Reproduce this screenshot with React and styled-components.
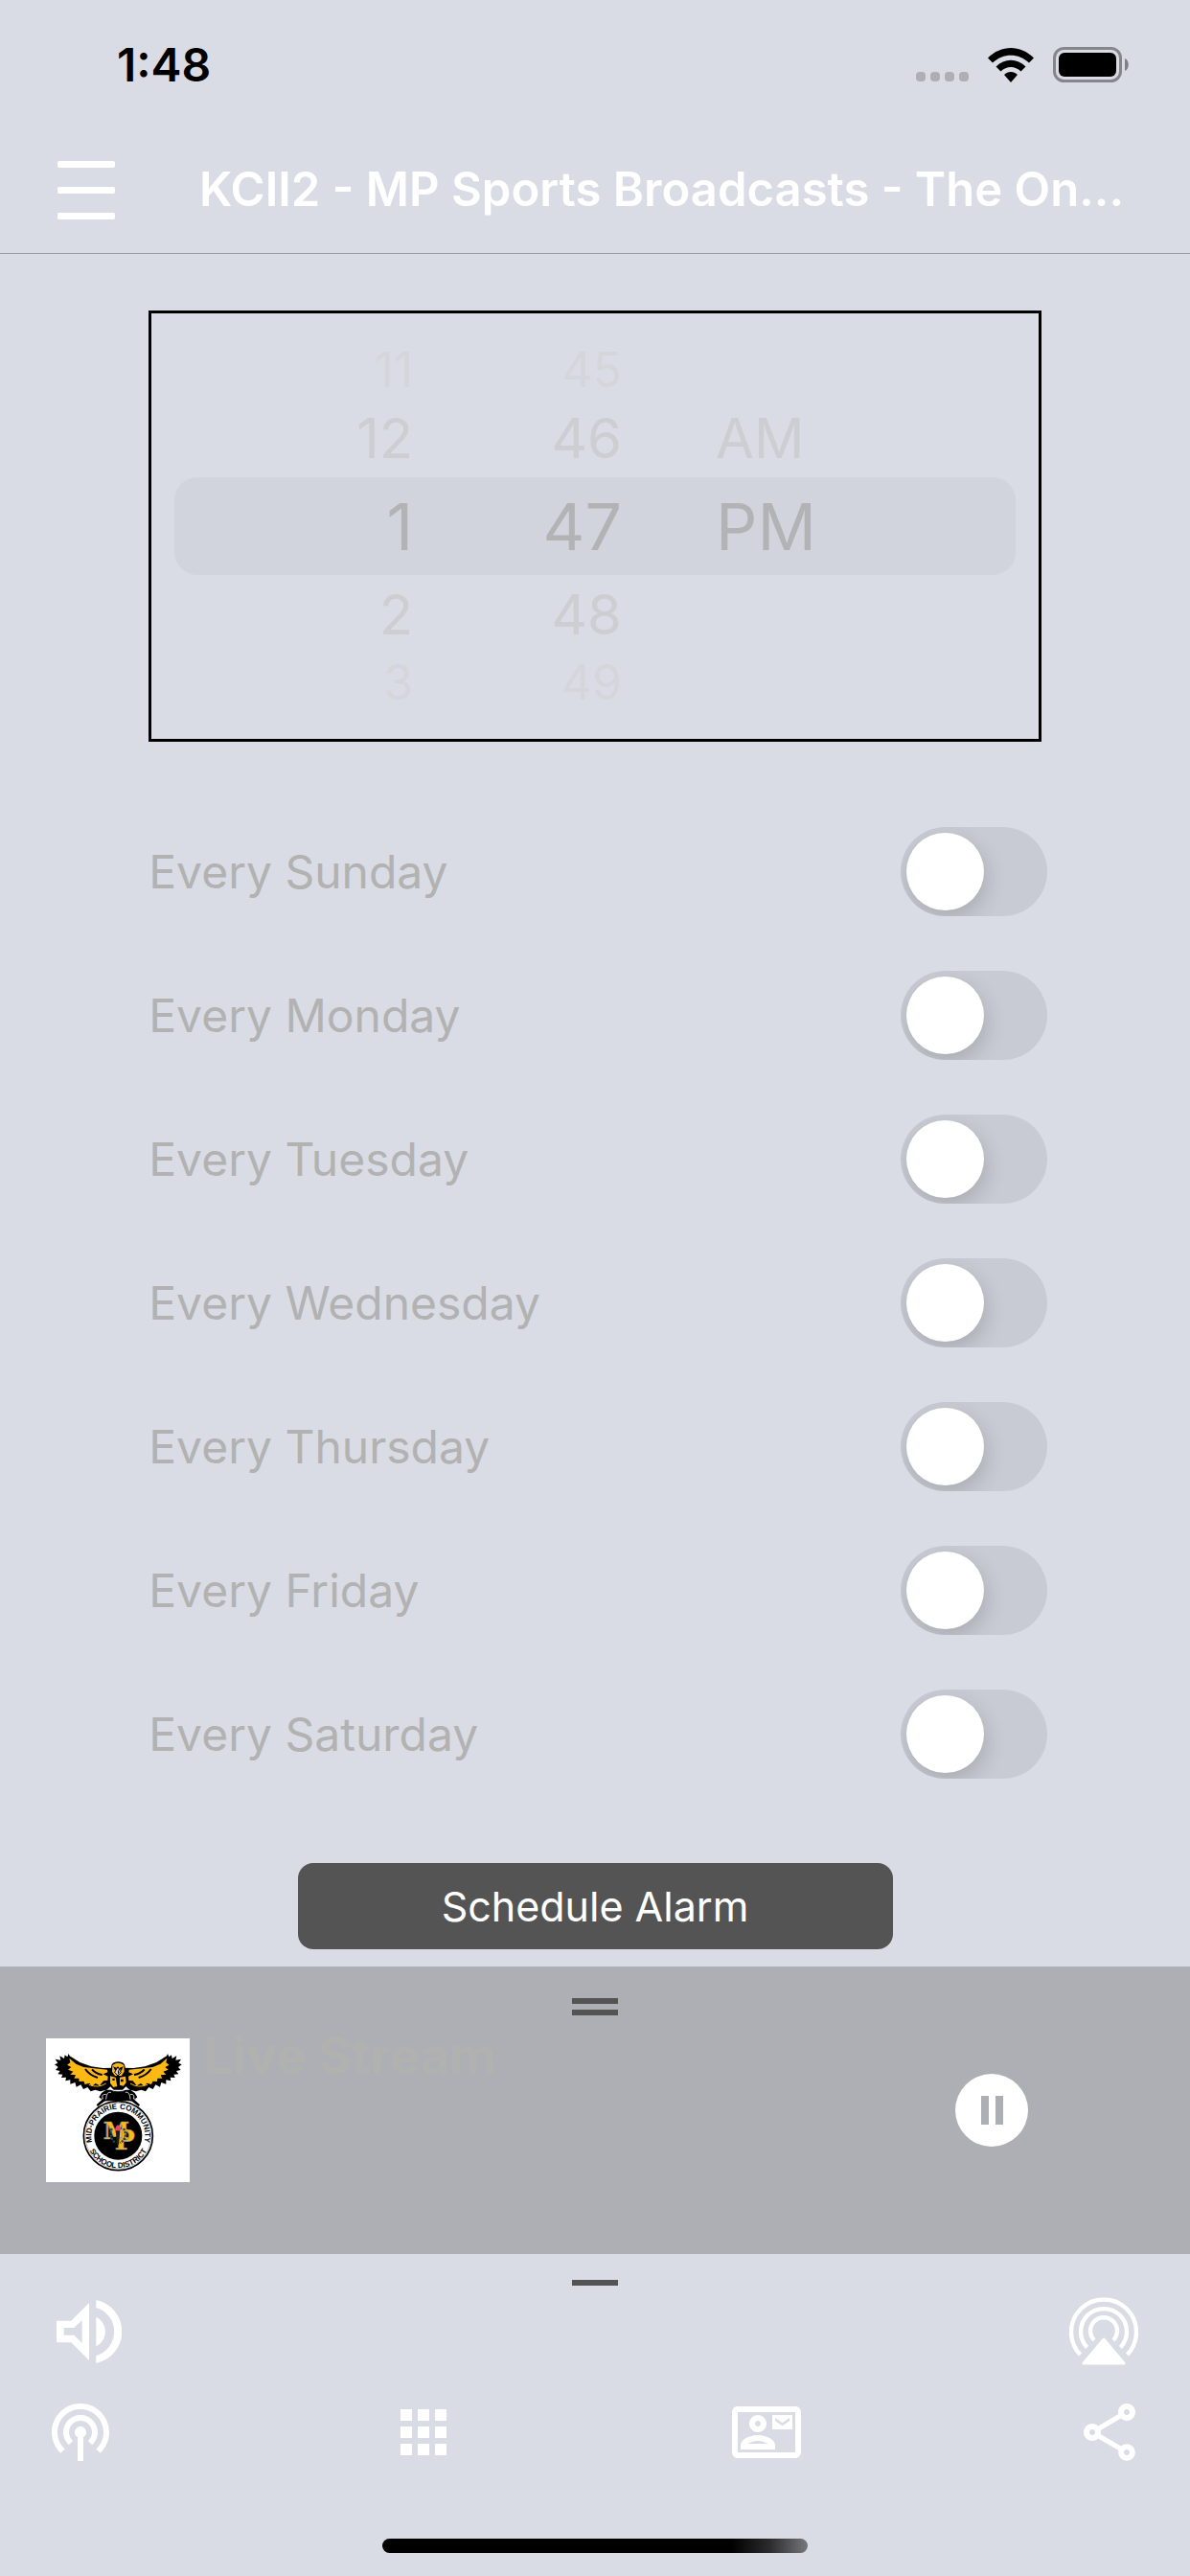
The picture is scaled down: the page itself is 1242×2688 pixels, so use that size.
import React, { useState } from "react";
import styled, { createGlobalStyle } from "styled-components";
import { MdApps, MdOutlineContactMail, MdOutlineShare, MdPodcasts } from "react-icons/md";

const GlobalStyle = createGlobalStyle`
  * {
    box-sizing: border-box;
  }

  body {
    margin: 0;
    background-color: #d9dce4;
    font-family: Inter, "Liberation Sans", sans-serif;
  }

  button {
    border: 0;
    padding: 0;
    background: none;
    color: inherit;
    font: inherit;
    cursor: pointer;
  }

  svg {
    display: block;
  }
`;

const Screen = styled.div`
  display: flex;
  flex-direction: column;
  min-height: 100vh;
`;

const StatusBar = styled.div`
  display: flex;
  align-items: center;
  justify-content: space-between;
  height: 132px;
  padding: 3px 64px 0 122px;
`;

const Clock = styled.time`
  font-size: 48px;
  font-weight: 600;
  line-height: 60px;
`;

const StatusIcons = styled.div`
  display: flex;
  align-items: center;
  gap: 20px;
`;

const SignalDots = styled.div`
  display: flex;
  align-self: flex-end;
  gap: 5px;
  padding-bottom: 1px;

  span {
    width: 10px;
    height: 10px;
    border-radius: 4px;
    background-color: #aeafb4;
  }
`;

const Header = styled.header`
  display: flex;
  align-items: center;
  gap: 88px;
  height: 133px;
  padding: 0 68px 0 60px;
  border-bottom: 1px solid #9b9ca1;
  color: #ffffff;

  h1 {
    flex: 1;
    min-width: 0;
    margin: 0;
    font-size: 49px;
    font-weight: 600;
    line-height: 60px;
    white-space: nowrap;
  }
`;

const MenuButton = styled.button`
  display: flex;
  flex-direction: column;
  gap: 20px;
  width: 60px;

  span {
    height: 7px;
    border-radius: 2px;
    background-color: #ffffff;
  }
`;

const Main = styled.main`
  display: flex;
  flex: 1;
  flex-direction: column;
  width: 75%;
  margin: 0 auto;
  padding: 59px 0 18px;
`;

const Picker = styled.div`
  padding: 29px 24px;
  border: 3px solid #000000;
`;

const PickerRow = styled.div`
  display: grid;
  grid-template-columns: 249fr 218fr 411fr;
  align-items: center;
  height: ${({ $size }) => $size.height}px;
  border-radius: 24px;
  background-color: ${({ $selected }) => ($selected ? "#d1d4dc" : "transparent")};
  color: ${({ $size }) => $size.color};
  font-size: ${({ $size }) => $size.font}px;
  line-height: 1;
`;

const PickerValue = styled.button`
  justify-self: ${({ $period }) => ($period ? "start" : "end")};
  padding-left: ${({ $period }) => ($period ? "98px" : "0")};
`;

const DayList = styled.div`
  display: flex;
  flex-direction: column;
  gap: 57px;
  margin: 89px -6px 88px 0;
`;

const DayRow = styled.label`
  display: flex;
  align-items: center;
  justify-content: space-between;
  color: #b2b2b2;
  font-size: 48px;
  line-height: 60px;
`;

const Switch = styled.input`
  appearance: none;
  width: 153px;
  height: 93px;
  margin: 0;
  padding: 6px;
  overflow: hidden;
  border-radius: 47px;
  background-color: ${({ checked }) => (checked ? "#34c759" : "#c8cbd3")};
  cursor: pointer;

  &::before {
    content: "";
    display: block;
    width: 81px;
    height: 81px;
    margin-left: ${({ checked }) => (checked ? "60px" : "0")};
    border-radius: 50%;
    background-color: #ffffff;
    box-shadow: 2px 8px 22px rgba(0, 0, 0, 0.16);
  }
`;

const ScheduleButton = styled.button`
  align-self: center;
  width: 621px;
  max-width: 100%;
  height: 90px;
  border-radius: 16px;
  background-color: #545454;
  color: #ffffff;
  font-size: 43px;
`;

const Player = styled.section`
  height: 300px;
  padding-top: 33px;
  background-color: #aeafb4;
`;

const Handle = styled.div`
  width: 48px;
  height: ${({ $double }) => ($double ? "18px" : "6px")};
  margin: 0 auto;
  border: solid #545454;
  border-width: ${({ $double }) => ($double ? "6px 0" : "6px 0 0")};
`;

const PlayerBody = styled.div`
  display: flex;
  gap: 15px;
  padding: 24px 169px 0 48px;
`;

const Artwork = styled.svg`
  flex: none;
  width: 150px;
  height: 150px;
  background-color: #ffffff;
`;

const TrackTitle = styled.h2`
  flex: 1;
  margin: 0;
  color: #b1b1b0;
  font-size: 53px;
  font-weight: 700;
  line-height: 36px;
`;

const PauseButton = styled.button`
  display: flex;
  align-items: center;
  align-self: center;
  justify-content: center;
  gap: 7px;
  width: 76px;
  height: 76px;
  border-radius: 50%;
  background-color: #ffffff;

  span {
    width: 8px;
    height: 30px;
    background-color: #aeafb4;
  }
`;

const Footer = styled.footer`
  display: flex;
  flex-direction: column;
  height: 336px;
  padding: 27px 0 24px;
  color: #ffffff;
`;

const OutputRow = styled.div`
  display: flex;
  align-items: center;
  justify-content: space-between;
  padding: 12px 54px 0 59px;
`;

const TabBar = styled.nav`
  display: flex;
  justify-content: space-between;
  padding: 33px 48px 0;

  svg {
    width: 72px;
    height: 72px;
  }
`;

const HomeIndicator = styled.div`
  width: 444px;
  height: 15px;
  margin: auto auto 0;
  border-radius: 8px;
  background: linear-gradient(to right, #000000 82%, #2b2b2d 91%, #77787c);
`;

const days = ["Sunday", "Monday", "Tuesday", "Wednesday", "Thursday", "Friday", "Saturday"];

const outer = { height: 60, font: 50, color: "#d4d6db" };
const near = { height: 82, font: 58, color: "#cdced2" };
const center = { height: 102, font: 68, color: "#b2b3b5" };

const pickerRows = [
  { hour: "11", minute: "45", size: outer },
  { hour: "12", minute: "46", period: "AM", size: near },
  { hour: "1", minute: "47", period: "PM", size: center, selected: true },
  { hour: "2", minute: "48", size: near },
  { hour: "3", minute: "49", size: outer },
];

const WifiIcon = () => (
  <svg width="48" height="36" viewBox="0 0 48 36" aria-label="Wi-Fi">
    <path d="M0 10.5C14-3.5 34-3.5 48 10.5L43 15.5C32 5 16 5 5 15.5Z" />
    <path d="M8.500 19.500C17.500 10.500 30.500 10.500 39.500 19.500L34.500 24.500C28.500 18.500 19.500 18.500 13.500 24.500Z" />
    <path d="M17 28C21 24 27 24 31 28L24 36Z" />
  </svg>
);

const BatteryIcon = () => (
  <svg width="79" height="37" viewBox="0 0 79 37" aria-label="Battery">
    <rect x="1.500" y="1.500" width="69" height="34" rx="10" fill="none" stroke="#85868b" strokeWidth="3" />
    <rect x="6" y="6" width="60" height="25" rx="6" />
    <path d="M75 12C80 14 80 23 75 25Z" fill="#7f8085" />
  </svg>
);

const VolumeIcon = () => (
  <svg width="68" height="66" viewBox="117 90 204 198" fill="currentColor">
    <path
      fillRule="evenodd"
      d="M117 155H163L219 99V279L163 223H117ZM140 177V200H172L197 225V153L172 177Z"
    />
    <path d="M241 143C279 162 279 216 241 235Z" />
    <path d="M241 90A101 101 0 0 1 241 288V264A78 78 0 0 0 241 114Z" />
  </svg>
);

const AirplayIcon = () => (
  <svg width="72" height="72" viewBox="0 0 72 72" fill="none" stroke="currentColor" strokeWidth="4.400">
    <path d="M11.500 60A34 34 0 1 1 60.500 60" />
    <path d="M18.500 52.500A24 24 0 1 1 53.500 52.500" />
    <path d="M26 45A14 14 0 1 1 46 45" />
    <path d="M36 44L57 69H15Z" fill="currentColor" strokeWidth="3" strokeLinejoin="round" />
  </svg>
);

const Wing = () => (
  <g>
    <path d="M296 233L262 234L226 229L190 216L158 196L155 189L151 199L143 193L141 204L127 196L130 209L113 206L121 218L111 223L122 231L114 240L128 243L121 253L136 254L132 264L147 263L145 274L160 271L160 284L175 279L179 293L193 286L201 300L214 294L224 307L238 302L254 307L274 302L290 288L300 288Z" />
    <path
      fill="#fdb913"
      d="M157 203L178 221L202 231L235 235L276 239L277 247L263 253L278 260L277 272L264 274L252 289L239 282L228 291L220 281L206 285L202 275L188 276L187 266L172 266L177 256L160 254L169 245L153 239L163 231L150 224L160 217Z"
    />
    <path d="M207 237Q221 257 246 264M228 238Q238 251 260 255" fill="none" stroke="#000" strokeWidth="6" />
    <path d="M272 282Q248 298 218 286" fill="none" stroke="#fdb913" strokeWidth="3" />
    <path d="M286 302L304 308L300 331L267 338L246 354L242 349L259 333L250 325L258 312L272 302Z" />
    <path
      d="M303 306Q290 304 287 326M288 310Q273 306 272 332M272 316Q256 315 262 330L252 331"
      fill="none"
      stroke="#c8cacc"
      strokeWidth="3"
    />
  </g>
);

const SchoolLogo = () => (
  <Artwork viewBox="84 141 450 450" role="img" aria-label="Mid-Prairie Community School District">
    <defs>
      <path id="seal-top" d="M238 489A84 84 0 1 1 382 489" />
      <path id="seal-bottom" d="M212 470A101 101 0 0 0 408 470" />
    </defs>
    <Wing />
    <g transform="matrix(-1 0 0 1 620 0)">
      <Wing />
    </g>
    <path d="M288 232Q288 214 310 214Q332 214 332 232L340 286L324 302H296L280 286Z" />
    <path
      fill="#fdb913"
      d="M292 225Q310 211 328 225L329 245L320 258H300L291 245ZM285 259L302 263L307 291L295 294L285 281ZM315 263L333 260L335 280L326 290L315 287Z"
    />
    <path d="M294 229L307 234L301 243ZM326 229L313 234L320 243ZM292 266H299V273H292ZM318 269H326V277H318Z" />
    <path d="M309 230L319 248L309 258L299 247Z" fill="#d9d9dc" stroke="#000" strokeWidth="3" />
    <path d="M309 238L314 248L309 254Z" />
    <path d="M290 307H330L346 337H274Z" />
    <circle cx="310" cy="446" r="108" fill="#fff" stroke="#000" strokeWidth="5" />
    <circle cx="310" cy="446" r="103" fill="none" stroke="#999" strokeWidth="2" />
    <circle cx="310" cy="446" r="75" />
    <g fontFamily="Liberation Sans, sans-serif" fontSize="24" fontWeight="700" textAnchor="middle">
      <text>
        <textPath href="#seal-top" startOffset="50%">MID-PRAIRIE COMMUNITY</textPath>
      </text>
      <text>
        <textPath href="#seal-bottom" startOffset="50%">SCHOOL DISTRICT</textPath>
      </text>
    </g>
    <text
      fontFamily="DejaVu Serif, serif"
      fontWeight="700"
      fill="#fdb913"
      stroke="#8f8f92"
      strokeWidth="2"
      textAnchor="middle"
    >
      <tspan x="331" y="490" fontSize="84">P</tspan>
      <tspan x="304" y="456" fontSize="74">M</tspan>
    </text>
    <path d="M290 423Q280 452 302 468M327 423Q342 452 316 468" fill="none" stroke="#24454a" strokeWidth="7" strokeDasharray="7 3" />
    <path d="M302 430H316L312 473H306Z" fill="#1c1c1c" />
    <path d="M300 429Q299 421 309 411Q320 421 318 429Z" fill="#ef4454" />
  </Artwork>
);

const App = () => {
  const [enabled, setEnabled] = useState({});
  const toggleDay = (day) => setEnabled({ ...enabled, [day]: !enabled[day] });

  return (
    <Screen>
      <GlobalStyle />
      <StatusBar>
        <Clock>1:48</Clock>
        <StatusIcons>
          <SignalDots>
            <span />
            <span />
            <span />
            <span />
          </SignalDots>
          <WifiIcon />
          <BatteryIcon />
        </StatusIcons>
      </StatusBar>
      <Header>
        <MenuButton aria-label="Menu">
          <span />
          <span />
          <span />
        </MenuButton>
        <h1>KCII2 - MP Sports Broadcasts - The On...</h1>
      </Header>
      <Main>
        <Picker role="group" aria-label="Alarm time">
          {pickerRows.map(({ hour, minute, period, size, selected }) => (
            <PickerRow key={minute} $size={size} $selected={selected}>
              <PickerValue>{hour}</PickerValue>
              <PickerValue>{minute}</PickerValue>
              {period && <PickerValue $period>{period}</PickerValue>}
            </PickerRow>
          ))}
        </Picker>
        <DayList>
          {days.map((day) => (
            <DayRow key={day}>
              Every {day}
              <Switch
                type="checkbox"
                role="switch"
                checked={Boolean(enabled[day])}
                onChange={() => toggleDay(day)}
              />
            </DayRow>
          ))}
        </DayList>
        <ScheduleButton>Schedule Alarm</ScheduleButton>
      </Main>
      <Player>
        <Handle $double />
        <PlayerBody>
          <SchoolLogo />
          <TrackTitle>Live Stream</TrackTitle>
          <PauseButton aria-label="Pause">
            <span />
            <span />
          </PauseButton>
        </PlayerBody>
      </Player>
      <Footer>
        <Handle />
        <OutputRow>
          <button aria-label="Volume">
            <VolumeIcon />
          </button>
          <button aria-label="AirPlay">
            <AirplayIcon />
          </button>
        </OutputRow>
        <TabBar>
          <button aria-label="Podcasts">
            <MdPodcasts />
          </button>
          <button aria-label="Apps">
            <MdApps />
          </button>
          <button aria-label="Contact">
            <MdOutlineContactMail />
          </button>
          <button aria-label="Share">
            <MdOutlineShare />
          </button>
        </TabBar>
        <HomeIndicator />
      </Footer>
    </Screen>
  );
};

export default App;
